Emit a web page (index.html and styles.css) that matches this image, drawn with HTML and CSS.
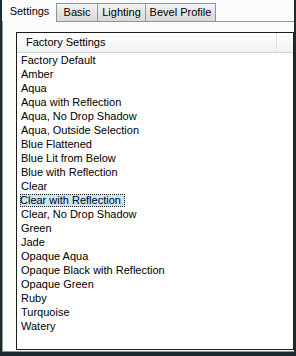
FILE: index.html
```html
<!DOCTYPE html>
<html lang="en">
<head>
    <meta charset="UTF-8">
    <title>Settings</title>
    <link rel="stylesheet" href="styles.css">
</head>
<body>
    <div class="window">
        <div class="tabs">
            <div class="tab active">Settings</div>
            <div class="tab tab-basic">Basic</div>
            <div class="tab tab-lighting">Lighting</div>
            <div class="tab tab-bevel">Bevel Profile</div>
        </div>
        <div class="panel">
            <div class="listbox">
                <div class="header">
                    <div class="col">Factory Settings</div>
                    <div class="col-rest"></div>
                </div>
                <ul class="items">
                    <li>Factory Default</li>
                    <li>Amber</li>
                    <li>Aqua</li>
                    <li>Aqua with Reflection</li>
                    <li>Aqua, No Drop Shadow</li>
                    <li>Aqua, Outside Selection</li>
                    <li>Blue Flattened</li>
                    <li>Blue Lit from Below</li>
                    <li>Blue with Reflection</li>
                    <li>Clear</li>
                    <li><span class="selected">Clear with Reflection</span></li>
                    <li>Clear, No Drop Shadow</li>
                    <li>Green</li>
                    <li>Jade</li>
                    <li>Opaque Aqua</li>
                    <li>Opaque Black with Reflection</li>
                    <li>Opaque Green</li>
                    <li>Ruby</li>
                    <li>Turquoise</li>
                    <li>Watery</li>
                </ul>
            </div>
        </div>
    </div>
</body>
</html>
```

FILE: styles.css
```css
body {
    margin: 0;
    background-color: #1d2a31;
    font-family: "Liberation Sans", Arial, sans-serif;
    font-size: 11px;
    color: #000000;
}

.window {
    margin-left: 2px;
    width: 292px;
    height: 352px;
    background-color: #fcfcfc;
    display: flex;
    flex-direction: column;
}

.tabs {
    display: flex;
    align-items: flex-end;
    height: 22px;
    padding-left: 1px;
    border-bottom: 1px solid #8d9799;
    box-sizing: border-box;
}

.tab {
    height: 18px;
    line-height: 17px;
    text-align: center;
    white-space: nowrap;
    background: linear-gradient(#f2f2f2, #d8d8d8);
    border: 1px solid #8d9799;
    border-bottom: none;
    border-left: none;
    box-sizing: border-box;
}

.tab.active {
    width: 53px;
    height: 22px;
    line-height: 21px;
    background: #fcfcfc;
    border: 1px solid #fcfcfc;
    border-bottom: none;
    margin-bottom: -1px;
}

.tab-basic {
    width: 42px;
    border-left: 1px solid #8d9799;
}

.tab-lighting {
    width: 48px;
}

.tab-bevel {
    width: 70px;
}

.panel {
    flex: 1;
    padding: 10px 0 1px 13px;
    border-left: 1px solid #8d9799;
    border-bottom: 1px solid #8d9799;
    display: flex;
}

.listbox {
    flex: 1;
    border: 1px solid #1b1b1b;
    background-color: #ffffff;
    display: flex;
    flex-direction: column;
}

.header {
    display: flex;
    height: 19px;
    background: linear-gradient(#ffffff, #f1f2f4);
    border-bottom: 1px solid #d5d5d5;
}

.col {
    width: 260px;
    padding-left: 9px;
    line-height: 18px;
    border-right: 1px solid #e3e4e6;
    box-sizing: border-box;
}

.col-rest {
    flex: 1;
}

.items {
    list-style-type: none;
    margin: 0;
    padding: 0 0 0 4px;
}

.items li {
    height: 14px;
    line-height: 14px;
}

.selected {
    display: inline-block;
    margin-left: -1px;
    padding: 0 4px 0 0;
    background-color: #cde6f7;
    outline: 1px dotted #222222;
    outline-offset: -1px;
    line-height: 13px;
}
```
